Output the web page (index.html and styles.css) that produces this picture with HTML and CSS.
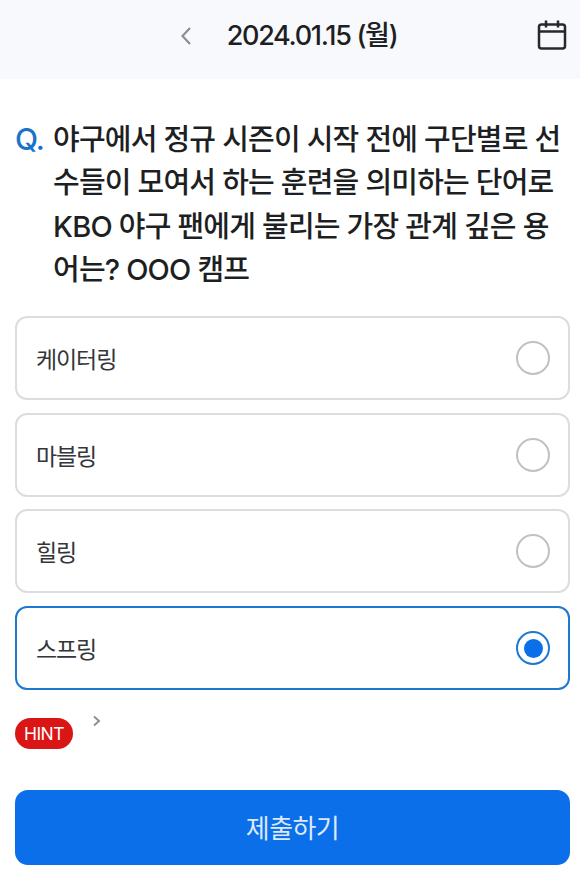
FILE: index.html
```html
<!DOCTYPE html>
<html lang="ko">
<head>
<meta charset="utf-8">
<title>퀴즈</title>
<link rel="stylesheet" href="styles.css">
</head>
<body>
<header class="topbar">
  <svg class="back" width="14" height="22" viewBox="0 0 14 22"><path d="M11 3 3.500 11 11 19" fill="none" stroke="#8b8f96" stroke-width="2.200"/></svg>
  <h1 class="date">2024.01.15 (월)</h1>
  <svg class="cal" width="30" height="32" viewBox="0 0 30 32"><g fill="none" stroke="#26282c" stroke-width="2.500"><rect x="2" y="5.500" width="26" height="24" rx="2.500"/><path d="M2 12.500h26M9 1.500v7M21 1.500v7"/></g></svg>
</header>
<main class="content">
  <div class="question">
    <span class="q">Q.</span>
    <p class="qtext">야구에서 정규 시즌이 시작 전에 구단별로 선<br>수들이 모여서 하는 훈련을 의미하는 단어로<br>KBO 야구 팬에게 불리는 가장 관계 깊은 용<br>어는? OOO 캠프</p>
  </div>
  <ul class="options">
    <li class="option"><span>케이터링</span><i class="radio"></i></li>
    <li class="option"><span>마블링</span><i class="radio"></i></li>
    <li class="option"><span>힐링</span><i class="radio"></i></li>
    <li class="option selected"><span>스프링</span><i class="radio"></i></li>
  </ul>
  <div class="hint">
    <span class="badge">HINT</span>
    <svg class="chev" width="10" height="12" viewBox="0 0 10 12"><path d="M2 1.500 7 6 2 10.500" fill="none" stroke="#8b8f96" stroke-width="2"/></svg>
  </div>
  <button class="submit">제출하기</button>
</main>
</body>
</html>
```
FILE: styles.css
```css
* { box-sizing: border-box; }
html, body { margin: 0; padding: 0; background: #fff; }
body {
  width: 580px;
  height: 870px;
  overflow: hidden;
  font-family: "Noto Sans CJK KR", "Noto Sans", sans-serif;
  color: #1d1f23;
}
.topbar {
  height: 79px;
  background: #f8f9fd;
  display: flex;
  align-items: center;
  justify-content: center;
  position: relative;
  padding: 0 0 8px 0;
}
.back { margin-right: 34px; margin-left: -4px; }
.date {
  margin: 0;
  font-family: "Inter", "Noto Sans CJK KR", sans-serif;
  font-size: 27px;
  font-weight: 500;
  letter-spacing: -1.300px;
  color: #1d1f23;
  line-height: 36px;
}
.cal { position: absolute; right: 13px; top: 19px; }
.content { padding: 0 10px 0 15px; }
.question {
  display: flex;
  padding-top: 39px;
  height: 237px;
}
.q {
  flex: none;
  width: 38px;
  font-family: "Inter", sans-serif;
  font-size: 30px;
  font-weight: 500;
  color: #1a73c9;
  line-height: 43px;
  letter-spacing: -1px;
}
.qtext {
  margin: 0;
  width: 516px;
  font-family: "Inter", "Noto Sans CJK KR", sans-serif;
  font-size: 29px;
  font-weight: 500;
  line-height: 43.300px;
  letter-spacing: -0.800px;
  color: #1d1f23;
  white-space: nowrap;
}
.options { list-style: none; margin: 0; padding: 0; display: flex; flex-direction: column; gap: 12.700px; }
.option {
  height: 84px;
  border: 2px solid #dcdde0;
  border-radius: 12px;
  display: flex;
  align-items: center;
  justify-content: space-between;
  padding: 0 18px 0 19px;
  font-size: 23px;
  letter-spacing: -1.100px;
  color: #33363b;
}
.radio {
  width: 34px;
  height: 34px;
  border-radius: 50%;
  border: 2px solid #bfc1c5;
  background: #fff;
  display: block;
}
.selected { border-color: #1f78cf; }
.selected .radio {
  border-color: #1f78cf;
  padding: 5.500px;
  background: #0a6fe8 content-box;
  box-shadow: inset 0 0 0 4px #fff;
}
.hint { display: flex; align-items: flex-start; height: 100px; padding-top: 28px; }
.badge {
  width: 58px;
  height: 31px;
  border-radius: 16px;
  background: #d91515;
  color: #fff;
  font-family: "Inter", sans-serif;
  font-size: 17.500px;
  font-weight: 400;
  letter-spacing: -0.600px;
  display: flex;
  align-items: center;
  justify-content: center;
}
.chev { margin: -3px 0 0 19px; }
.submit {
  display: block;
  width: 555px;
  height: 75px;
  border: 0;
  border-radius: 13px;
  background: #0a6fe8;
  color: #dbe9fb;
  font-family: inherit;
  font-size: 26px;
  letter-spacing: -0.600px;
  padding-bottom: 4px;
}
```
